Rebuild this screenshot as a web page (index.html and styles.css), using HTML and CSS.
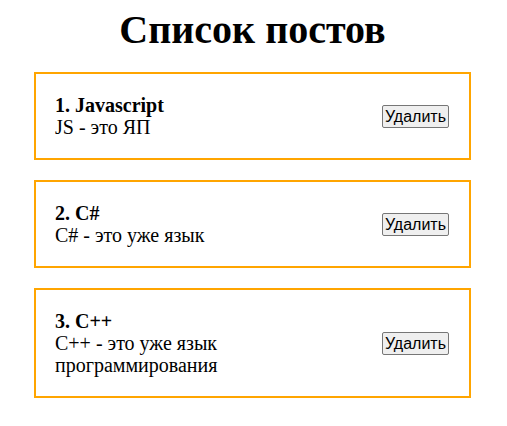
FILE: index.html
```html
<!DOCTYPE html>
<html lang="ru">
<head>
<meta charset="utf-8">
<title>Список постов</title>
<link rel="stylesheet" href="styles.css">
</head>
<body>
<div class="app">
  <h1 class="title">Список постов</h1>
  <div class="post">
    <div class="post-content">
      <strong>1. Javascript</strong>
      <div>JS - это ЯП</div>
    </div>
    <div class="post-btns"><button class="btn">Удалить</button></div>
  </div>
  <div class="post">
    <div class="post-content">
      <strong>2. C#</strong>
      <div>C# - это уже язык</div>
    </div>
    <div class="post-btns"><button class="btn">Удалить</button></div>
  </div>
  <div class="post">
    <div class="post-content">
      <strong>3. C++</strong>
      <div>C++ - это уже язык программирования</div>
    </div>
    <div class="post-btns"><button class="btn">Удалить</button></div>
  </div>
</div>
</body>
</html>
```
FILE: styles.css
```css
html { font-size: 20px; }
body {
  margin: 8px;
  font-family: "Liberation Serif", "Times New Roman", serif;
  font-size: 20px;
  color: #000;
  background: #fff;
}
.app {
  width: 437px;
  margin-left: 26px;
}
.title {
  margin: 0;
  font-size: 40px;
  line-height: 44px;
  font-weight: bold;
  text-align: center;
}
.post {
  display: flex;
  justify-content: space-between;
  align-items: center;
  padding: 20px 20px 20px 19px;
  border: 2px solid orange;
  margin-top: 20px;
  line-height: 22px;
}
.post-content {
  max-width: 200px;
}
.post-content strong { display: block; }
.btn {
  font-family: "Liberation Sans", Arial, sans-serif;
  font-size: 16px;
  padding: 1px 2px;
  color: #000;
  background: #efefef;
  border: 1px solid #767676;
  border-radius: 2px;
  line-height: 19px;
}
```
